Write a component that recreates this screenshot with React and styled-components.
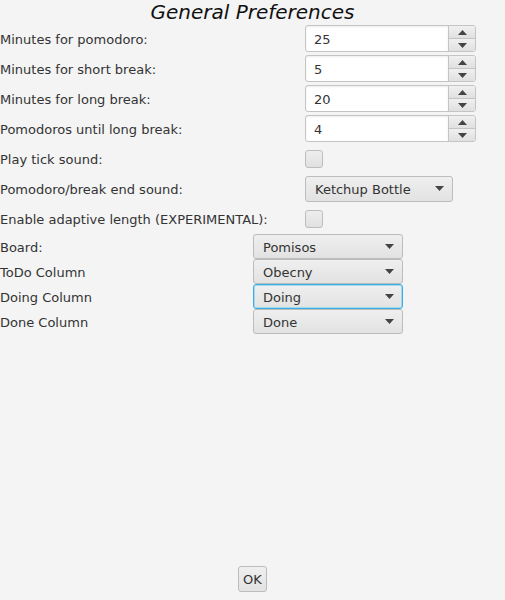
import styled, { createGlobalStyle } from 'styled-components';

const Global = createGlobalStyle`
    html, body {
        margin: 0;
        padding: 0;
        background: #f4f4f4;
    }
    body {
        font-family: 'DejaVu Sans', 'Liberation Sans', sans-serif;
        font-size: 13px;
        color: #333333;
    }
`

const spinners = [
    { label: "Minutes for pomodoro:", value: "25" },
    { label: "Minutes for short break:", value: "5" },
    { label: "Minutes for long break:", value: "20" },
    { label: "Pomodoros until long break:", value: "4" },
];

const columns = [
    { label: "Board:", value: "Pomisos" },
    { label: "ToDo Column", value: "Obecny" },
    { label: "Doing Column", value: "Doing", focused: true },
    { label: "Done Column", value: "Done" },
];

function Arrow({ down }) {
    return (
        <svg width="9" height="5" viewBox="0 0 9 5">
            <polygon points={down ? "0,0 9,0 4.5,5" : "0,5 9,5 4.5,0"} fill="#444" />
        </svg>
    )
}

function Spinner({ value }) {
    return (
        <SpinBox>
            <SpinField>{value}</SpinField>
            <SpinButtons>
                <SpinButton><Arrow /></SpinButton>
                <SpinButton $bottom><Arrow down /></SpinButton>
            </SpinButtons>
        </SpinBox>
    )
}

function Combo({ value, width, focused }) {
    return (
        <ComboBox $width={width} $focused={focused}>
            <ComboText>{value}</ComboText>
            <Arrow down />
        </ComboBox>
    )
}

export default function App() {
    return (
        <>
            <Global />
            <Page>
                <Title>General Preferences</Title>
                <TopGrid>
                    {spinners.map((s) => (
                        <Row key={s.label}>
                            <Label>{s.label}</Label>
                            <Spinner value={s.value} />
                        </Row>
                    ))}
                    <Row>
                        <Label>Play tick sound:</Label>
                        <CheckBox />
                    </Row>
                    <Row>
                        <Label>Pomodoro/break end sound:</Label>
                        <Combo value="Ketchup Bottle" width={148} />
                    </Row>
                    <Row>
                        <Label>Enable adaptive length (EXPERIMENTAL):</Label>
                        <CheckBox />
                    </Row>
                </TopGrid>
                <BottomGrid>
                    {columns.map((c) => (
                        <BottomRow key={c.label}>
                            <Label>{c.label}</Label>
                            <Combo value={c.value} width={150} focused={c.focused} />
                        </BottomRow>
                    ))}
                </BottomGrid>
                <Footer>
                    <Button>OK</Button>
                </Footer>
            </Page>
        </>
    )
}

const Page = styled.div`
    width: 505px;
    height: 600px;
    display: flex;
    flex-direction: column;
    box-sizing: border-box;
`
const Title = styled.h1`
    margin: 0;
    height: 25px;
    font-size: 20px;
    font-weight: normal;
    font-style: italic;
    line-height: 25px;
    text-align: center;
    color: #111;
`
const TopGrid = styled.div`
    display: flex;
    flex-direction: column;
    gap: 3px;
`
const Row = styled.div`
    height: 27px;
    display: grid;
    grid-template-columns: 305px auto;
    align-items: center;
`
const BottomGrid = styled.div`
    margin-top: 2px;
    display: flex;
    flex-direction: column;
`
const BottomRow = styled.div`
    height: 25px;
    display: grid;
    grid-template-columns: 253px auto;
    align-items: center;
`
const Label = styled.span`
    white-space: nowrap;
    padding-top: 2px;
`
const SpinBox = styled.div`
    width: 171px;
    height: 27px;
    display: flex;
    box-sizing: border-box;
    border: 1px solid #c4c4c4;
    border-radius: 3px;
    overflow: hidden;
    background: white;
`
const SpinField = styled.div`
    flex: 1;
    display: flex;
    align-items: center;
    padding: 1px 0 0 8px;
    box-shadow: inset 0 1px 2px rgba(0, 0, 0, 0.08);
`
const SpinButtons = styled.div`
    width: 26px;
    display: flex;
    flex-direction: column;
    border-left: 1px solid #c4c4c4;
`
const SpinButton = styled.div`
    flex: 1;
    display: flex;
    align-items: center;
    justify-content: center;
    background: linear-gradient(#f0f0f0, #e0e0e0);
    border-top: ${(p) => (p.$bottom ? "1px solid #c4c4c4" : "none")};
`
const CheckBox = styled.div`
    width: 18px;
    height: 18px;
    box-sizing: border-box;
    border: 1px solid #bdbdbd;
    border-radius: 3px;
    background: linear-gradient(#eeeeee, #e0e0e0);
`
const ComboBox = styled.div`
    width: ${(p) => p.$width}px;
    height: ${(p) => (p.$width === 148 ? 26 : 25)}px;
    box-sizing: border-box;
    display: flex;
    align-items: center;
    justify-content: space-between;
    padding: 0 8px 0 9px;
    border: 1px solid ${(p) => (p.$focused ? "#3aaee0" : "#bcbcbc")};
    box-shadow: ${(p) => (p.$focused ? "inset 0 0 0 1px #a6d9ef" : "none")};
    border-radius: 3px;
    background: linear-gradient(#efefef, #e2e2e2);
`
const ComboText = styled.span`
    padding-top: 2px;
`
const Footer = styled.div`
    margin-top: auto;
    padding-bottom: 8px;
    display: flex;
    justify-content: center;
`
const Button = styled.button`
    width: 29px;
    height: 26px;
    padding: 1px 0 0;
    font-family: 'DejaVu Sans', sans-serif;
    font-size: 13px;
    color: #333;
    border: 1px solid #bcbcbc;
    border-radius: 3px;
    background: linear-gradient(#efefef, #e2e2e2);
`
